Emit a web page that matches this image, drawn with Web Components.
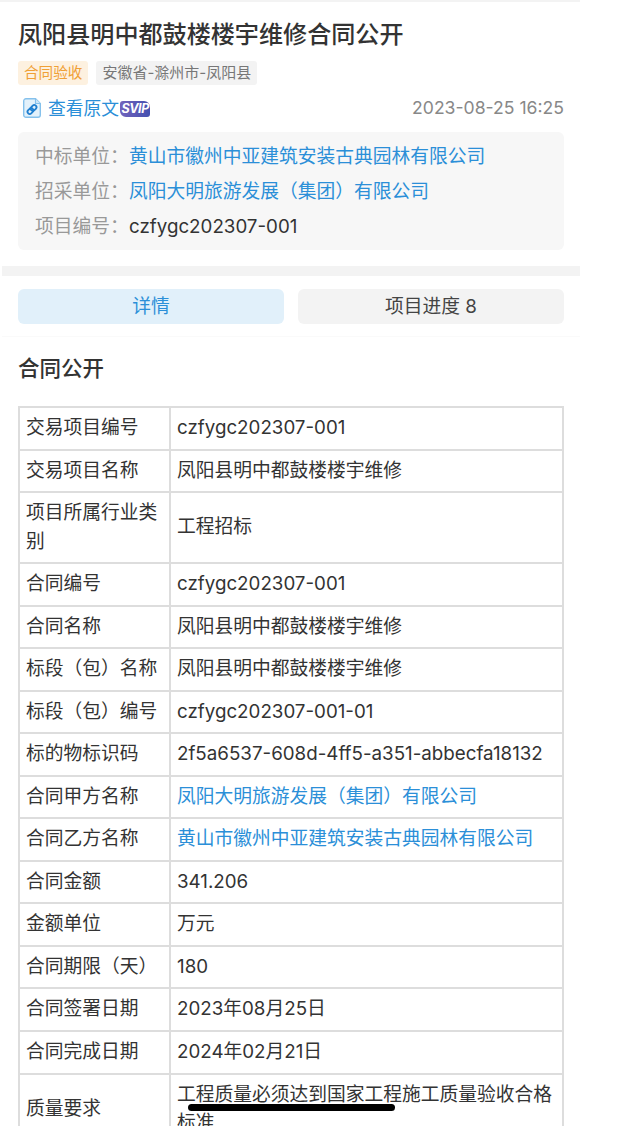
<!DOCTYPE html>
<html lang="zh">
<head>
<meta charset="utf-8">
<title>合同公开</title>
<style>
    html, body { margin: 0; padding: 0; background: #fff; height: 1126px; overflow: hidden; }
    body { font-family: Inter, "Noto Sans CJK SC", sans-serif; color: #333; }
</style>
</head>
<body>
<notice-page>
    <notice-head title="凤阳县明中都鼓楼楼宇维修合同公开" status="合同验收" region="安徽省-滁州市-凤阳县" date="2023-08-25 16:25"></notice-head>
    <notice-info>
        <info-line label="中标单位：" link>黄山市徽州中亚建筑安装古典园林有限公司</info-line>
        <info-line label="招采单位：" link>凤阳大明旅游发展（集团）有限公司</info-line>
        <info-line label="项目编号：">czfygc202307-001</info-line>
    </notice-info>
    <notice-tabs></notice-tabs>
    <notice-table heading="合同公开">
        <table-row label="交易项目编号">czfygc202307-001</table-row>
        <table-row label="交易项目名称">凤阳县明中都鼓楼楼宇维修</table-row>
        <table-row label="项目所属行业类别">工程招标</table-row>
        <table-row label="合同编号">czfygc202307-001</table-row>
        <table-row label="合同名称">凤阳县明中都鼓楼楼宇维修</table-row>
        <table-row label="标段（包）名称">凤阳县明中都鼓楼楼宇维修</table-row>
        <table-row label="标段（包）编号">czfygc202307-001-01</table-row>
        <table-row label="标的物标识码">2f5a6537-608d-4ff5-a351-abbecfa18132</table-row>
        <table-row label="合同甲方名称" link>凤阳大明旅游发展（集团）有限公司</table-row>
        <table-row label="合同乙方名称" link>黄山市徽州中亚建筑安装古典园林有限公司</table-row>
        <table-row label="合同金额">341.206</table-row>
        <table-row label="金额单位">万元</table-row>
        <table-row label="合同期限（天）">180</table-row>
        <table-row label="合同签署日期">2023年08月25日</table-row>
        <table-row label="合同完成日期">2024年02月21日</table-row>
        <table-row label="质量要求">工程质量必须达到国家工程施工质量验收合格标准</table-row>
    </notice-table>
</notice-page>
<home-bar></home-bar>

<script>
class NoticePage extends HTMLElement {
    constructor() {
        super();
        this.shadow = this.attachShadow({ mode: 'open' });
    }

    connectedCallback() {
        this.shadow.innerHTML = `
            <style>
                :host {
                    display: block;
                    width: 580px;
                    border-top: 2px solid #f3f3f3;
                }
            </style>
            <slot></slot>
        `;
    }
}

class NoticeHead extends HTMLElement {
    constructor() {
        super();
        this.shadow = this.attachShadow({ mode: 'open' });
    }

    connectedCallback() {
        this.shadow.innerHTML = `
            <style>
                :host { display: block; padding: 17px 16px 0 18px; }
                h1 {
                    margin: 0;
                    font-size: 24.1px;
                    line-height: 32px;
                    font-weight: 500;
                    color: #333;
                }
                .tags { display: flex; gap: 8px; margin-top: 10px; }
                .tag {
                    font-size: 14.6px;
                    line-height: 24px;
                    padding: 0 6px;
                    border-radius: 3px;
                }
                .status { background: #fdf1e0; color: #f0a035; }
                .region { background: #f3f3f3; color: #777; font-size: 15px; }
                .meta {
                    display: flex;
                    align-items: center;
                    margin-top: 9px;
                    height: 26px;
                }
                .icon { margin: 2px 0 0 4.5px; }
                .source {
                    color: #2b8fd8;
                    font-size: 17.8px;
                    margin-left: 7.5px;
                }
                .svip {
                    margin: 3px 0 0 1px;
                    width: 30px;
                    height: 16px;
                    line-height: 16px;
                    text-align: center;
                    border-radius: 3px 6px 3px 6px;
                    background: linear-gradient(90deg, #7263bb, #4450b0);
                    color: #fff;
                    font-size: 12.5px;
                    font-weight: 700;
                    font-style: italic;
                    letter-spacing: -0.4px;
                }
                .date {
                    margin-left: auto;
                    color: #888;
                    font-size: 17.6px;
                }
            </style>
            <h1>${this.getAttribute('title')}</h1>
            <div class="tags">
                <span class="tag status">${this.getAttribute('status')}</span>
                <span class="tag region">${this.getAttribute('region')}</span>
            </div>
            <div class="meta">
                <svg class="icon" width="18" height="20" viewBox="0 0 18 20" fill="none">
                    <path d="M3 .7h9.5l4.800 4.800V17a2.300 2.300 0 0 1-2.300 2.300H3A2.300 2.300 0 0 1 .7 17V3A2.300 2.300 0 0 1 3 .7z" fill="#e3f1fb" stroke="#85c1ec" stroke-width="1.4"/>
                    <path d="M12.5 .7v4.800h4.800" fill="#cfe6f8" stroke="#85c1ec" stroke-width="1.1"/>
                    <g transform="rotate(-45 9 11.5)" stroke="#1f7fd0" stroke-width="1.8">
                        <rect x="3.6" y="9.3" width="6.4" height="4.4" rx="2.2"/>
                        <rect x="8" y="9.3" width="6.4" height="4.4" rx="2.2"/>
                    </g>
                </svg>
                <span class="source">查看原文</span>
                <span class="svip">SVIP</span>
                <span class="date">${this.getAttribute('date')}</span>
            </div>
        `;
    }
}

class NoticeInfo extends HTMLElement {
    constructor() {
        super();
        this.shadow = this.attachShadow({ mode: 'open' });
    }

    connectedCallback() {
        this.shadow.innerHTML = `
            <style>
                :host {
                    display: block;
                    margin: 12px 16px 0 18px;
                    padding: 7px 17px 6px;
                    background: #f7f7f7;
                    border-radius: 6px;
                }
            </style>
            <slot></slot>
        `;
    }
}

class InfoLine extends HTMLElement {
    constructor() {
        super();
        this.shadow = this.attachShadow({ mode: 'open' });
    }

    connectedCallback() {
        this.shadow.innerHTML = `
            <style>
                :host {
                    display: flex;
                    font-size: 18.75px;
                    line-height: 35px;
                    color: #333;
                }
                .label { color: #999; width: 94px; flex: none; white-space: nowrap; }
                :host([link]) .value { color: #2b8fd8; }
            </style>
            <span class="label">${this.getAttribute('label')}</span>
            <span class="value"><slot></slot></span>
        `;
    }
}

class NoticeTabs extends HTMLElement {
    constructor() {
        super();
        this.shadow = this.attachShadow({ mode: 'open' });
    }

    connectedCallback() {
        this.shadow.innerHTML = `
            <style>
                :host {
                    display: block;
                    margin: 16px 0 0 2px;
                    padding: 13px 16px 12px 16px;
                    border-top: 10px solid #f3f3f3;
                    border-bottom: 1px solid #fafafa;
                }
                .tabs { display: grid; grid-template-columns: 266px 266px; gap: 14px; }
                .tab {
                    height: 35px;
                    line-height: 35px;
                    text-align: center;
                    font-size: 18.75px;
                    border-radius: 6px;
                }
                .on { background: #e1f0fa; color: #2b8fd8; }
                .off { background: #f3f3f3; color: #444; }
            </style>
            <div class="tabs">
                <div class="tab on">详情</div>
                <div class="tab off">项目进度 8</div>
            </div>
        `;
    }
}

class NoticeTable extends HTMLElement {
    constructor() {
        super();
        this.shadow = this.attachShadow({ mode: 'open' });
    }

    connectedCallback() {
        this.shadow.innerHTML = `
            <style>
                :host { display: block; padding: 0 16px 0 18px; }
                h2 {
                    margin: 0;
                    padding: 17px 0 24px;
                    font-size: 21.5px;
                    line-height: 28px;
                    font-weight: 500;
                    color: #333;
                }
                .table { width: 546px; border: solid #ddd; border-width: 2px 0 0 2px; box-sizing: border-box; }
            </style>
            <h2>${this.getAttribute('heading')}</h2>
            <div class="table"><slot></slot></div>
        `;
    }
}

class TableRow extends HTMLElement {
    constructor() {
        super();
        this.shadow = this.attachShadow({ mode: 'open' });
    }

    connectedCallback() {
        this.shadow.innerHTML = `
            <style>
                :host {
                    display: grid;
                    grid-template-columns: 151px 1fr;
                    font-size: 18.75px;
                    line-height: 28.53px;
                    color: #333;
                }
                .cell {
                    display: flex;
                    align-items: center;
                    padding: 6px 6px;
                    border: solid #ddd;
                    border-width: 0 2px 2px 0;
                    min-width: 0;
                }
                :host([link]) .value { color: #2b8fd8; }
            </style>
            <div class="cell">${this.getAttribute('label')}</div>
            <div class="cell value"><span><slot></slot></span></div>
        `;
    }
}

class HomeBar extends HTMLElement {
    constructor() {
        super();
        this.shadow = this.attachShadow({ mode: 'open' });
    }

    connectedCallback() {
        this.shadow.innerHTML = `
            <style>
                :host {
                    position: fixed;
                    left: 188px;
                    top: 1104px;
                    width: 207px;
                    height: 7px;
                    border-radius: 4px;
                    background: #000;
                }
            </style>
        `;
    }
}

customElements.define('notice-page', NoticePage);
customElements.define('notice-head', NoticeHead);
customElements.define('notice-info', NoticeInfo);
customElements.define('info-line', InfoLine);
customElements.define('notice-tabs', NoticeTabs);
customElements.define('notice-table', NoticeTable);
customElements.define('table-row', TableRow);
customElements.define('home-bar', HomeBar);
</script>
</body>
</html>
